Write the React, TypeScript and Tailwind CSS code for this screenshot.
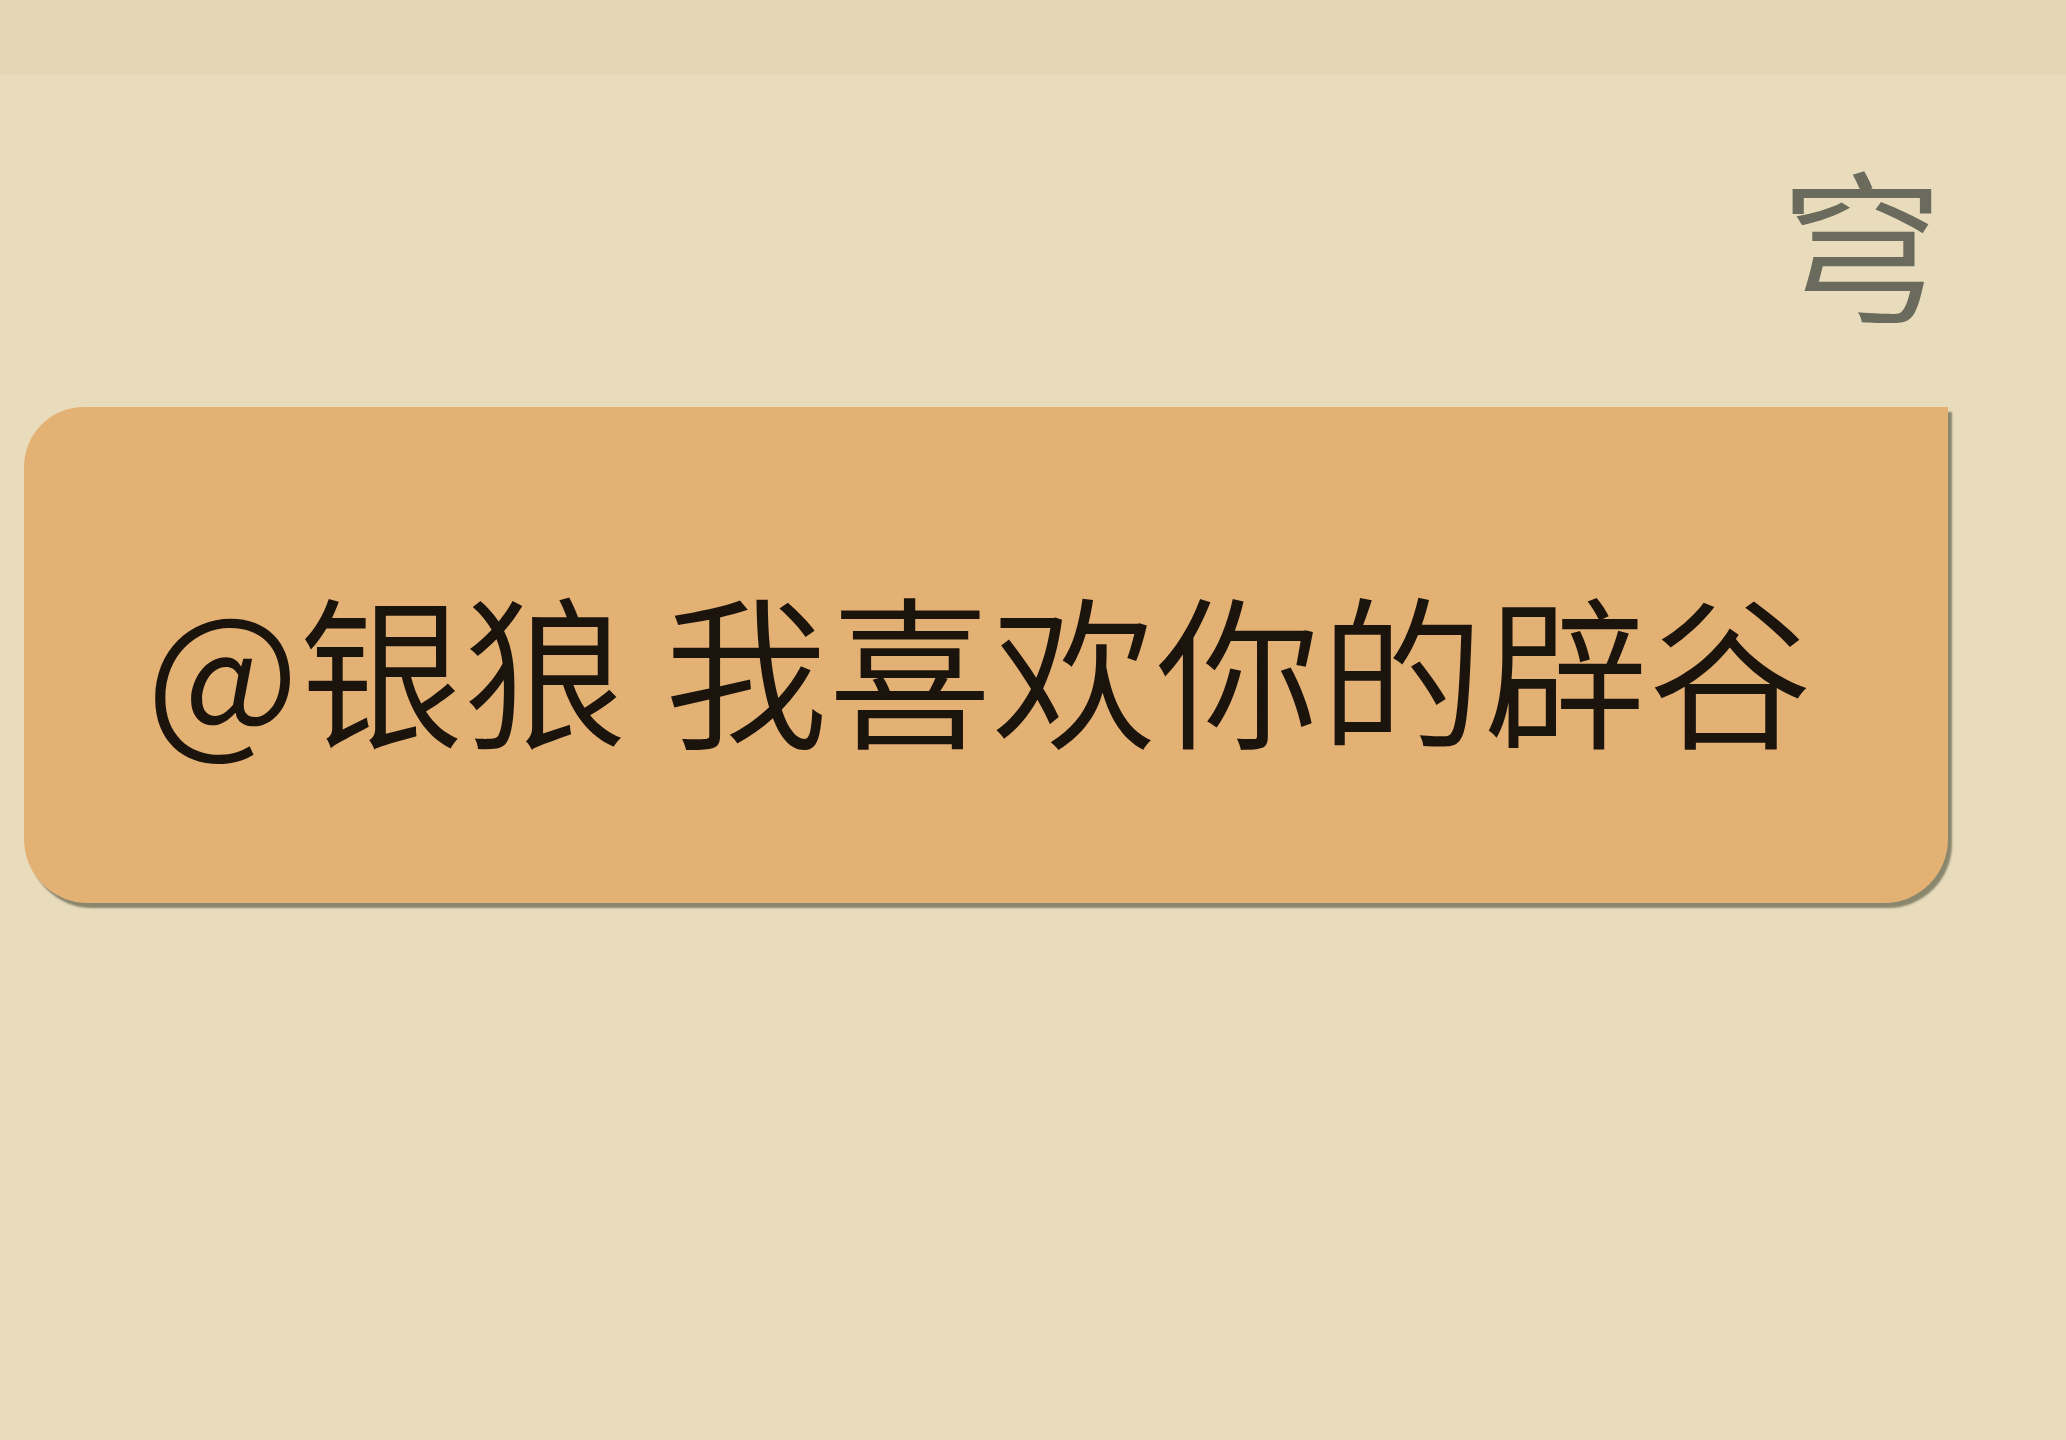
export default function App() {
  return (
    <div
      className="w-full h-[1440px] bg-[#e9dcbc] overflow-hidden"
      style={{ fontFamily: '"Noto Sans CJK SC", "Noto Sans", sans-serif' }}
    >
      {/* top bar strip */}
      <div className="h-[75px] bg-[#e4d7b6]" />

      <div className="flex flex-col pl-[24px] pr-[118px]">
        {/* sender name */}
        <div className="flex justify-end pt-[82px] pr-[4px]">
          <span className="text-[164px] leading-none font-[350] text-[#6a6b5c]">穹</span>
        </div>

        {/* message bubble */}
        <div className="mt-[86px] h-[496px] rounded-tl-[60px] rounded-bl-[64px] rounded-br-[64px] rounded-tr-none bg-[#e4b174] pl-[122px] pt-[176px] shadow-[4px_5px_2px_rgba(120,120,96,0.85)]">
          <p className="text-[164px] leading-none font-[350] text-[#1b140c] whitespace-nowrap">
            @银狼 我喜欢你的辟谷
          </p>
        </div>
      </div>
    </div>
  );
}
